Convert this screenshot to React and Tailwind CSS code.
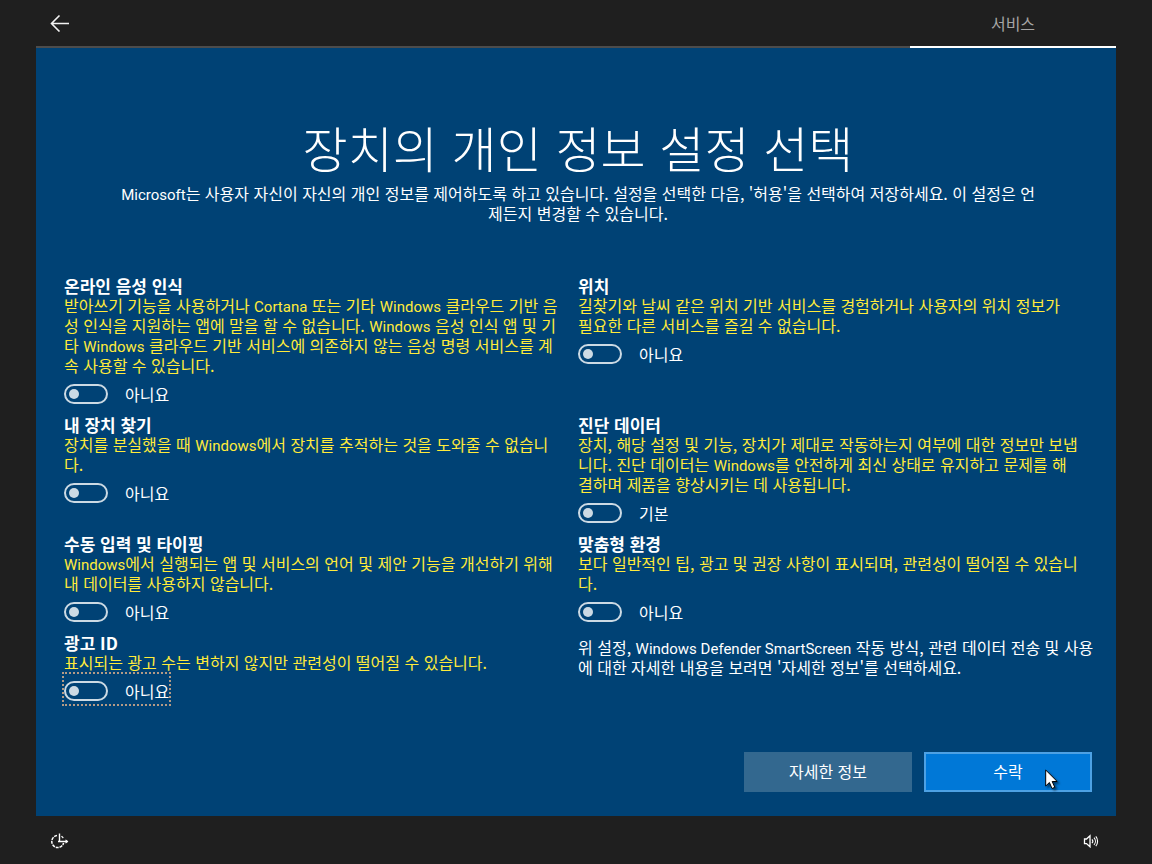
import React, { useState } from 'react';

const settings = [
  {
    id: 'speech',
    title: '온라인 음성 인식',
    text: '받아쓰기 기능을 사용하거나 Cortana 또는 기타 Windows 클라우드 기반 음\n성 인식을 지원하는 앱에 말을 할 수 없습니다. Windows 음성 인식 앱 및 기\n타 Windows 클라우드 기반 서비스에 의존하지 않는 음성 명령 서비스를 계\n속 사용할 수 있습니다.',
    off: '아니요',
    on: '예',
  },
  {
    id: 'location',
    title: '위치',
    text: '길찾기와 날씨 같은 위치 기반 서비스를 경험하거나 사용자의 위치 정보가\n필요한 다른 서비스를 즐길 수 없습니다.',
    off: '아니요',
    on: '예',
  },
  {
    id: 'find',
    title: '내 장치 찾기',
    text: '장치를 분실했을 때 Windows에서 장치를 추적하는 것을 도와줄 수 없습니\n다.',
    off: '아니요',
    on: '예',
  },
  {
    id: 'diagnostics',
    title: '진단 데이터',
    text: '장치, 해당 설정 및 기능, 장치가 제대로 작동하는지 여부에 대한 정보만 보냅\n니다. 진단 데이터는 Windows를 안전하게 최신 상태로 유지하고 문제를 해\n결하며 제품을 향상시키는 데 사용됩니다.',
    off: '기본',
    on: '전체',
  },
  {
    id: 'typing',
    title: '수동 입력 및 타이핑',
    text: 'Windows에서 실행되는 앱 및 서비스의 언어 및 제안 기능을 개선하기 위해\n내 데이터를 사용하지 않습니다.',
    off: '아니요',
    on: '예',
  },
  {
    id: 'tailored',
    title: '맞춤형 환경',
    text: '보다 일반적인 팁, 광고 및 권장 사항이 표시되며, 관련성이 떨어질 수 있습니\n다.',
    off: '아니요',
    on: '예',
  },
  {
    id: 'ads',
    title: '광고 ID',
    text: '표시되는 광고 수는 변하지 않지만 관련성이 떨어질 수 있습니다.',
    off: '아니요',
    on: '예',
    focused: true,
  },
];

const intro =
  "Microsoft는 사용자 자신이 자신의 개인 정보를 제어하도록 하고 있습니다. 설정을 선택한 다음, '허용'을 선택하여 저장하세요. 이 설정은 언\n제든지 변경할 수 있습니다.";

const note =
  "위 설정, Windows Defender SmartScreen 작동 방식, 관련 데이터 전송 및 사용\n에 대한 자세한 내용을 보려면 '자세한 정보'를 선택하세요.";

// Latin words get their own face, a little smaller than the Hangul around them
function Mixed({ children }) {
  return children.split(/([A-Za-z]+(?: [A-Za-z]+)*)/).map((part, i) =>
    i % 2 ? (
      <span key={i} className="font-['Roboto',sans-serif] text-[15px] leading-none">
        {part}
      </span>
    ) : (
      part
    )
  );
}

function Toggle({ setting }) {
  const [checked, setChecked] = useState(false);

  return (
    <label
      className={`relative mt-[9px] flex h-5 w-fit items-center gap-[17px] ${
        setting.focused
          ? 'before:absolute before:-inset-x-0.5 before:-top-[9px] before:-bottom-[5px] before:border-2 before:border-dotted before:border-[#b39a86]'
          : ''
      }`}
    >
      <input
        type="checkbox"
        role="switch"
        aria-label={setting.title}
        checked={checked}
        onChange={(e) => setChecked(e.target.checked)}
        className="peer sr-only"
      />
      <span className="flex h-5 w-11 items-center rounded-full border-2 border-[#ccdae4] px-[3px] peer-checked:justify-end">
        <span className="size-2.5 rounded-full bg-[#ccdae4]" />
      </span>
      <span>{checked ? setting.on : setting.off}</span>
    </label>
  );
}

function Setting({ setting }) {
  return (
    <section className="pb-[11px]">
      <h2 className="text-[17px] leading-[19px] font-bold">{setting.title}</h2>
      <p className="whitespace-pre-line text-[#ffeb3b]">
        <Mixed>{setting.text}</Mixed>
      </p>
      <Toggle setting={setting} />
    </section>
  );
}

function BackIcon() {
  return (
    <svg width="20" height="18" viewBox="0 0 20 18" fill="none" stroke="#f2f2f2" strokeWidth="1.6">
      <path d="M19 9.5H1.5M9.5 1.5l-8 8 8 8" />
    </svg>
  );
}

function EaseOfAccessIcon() {
  return (
    <svg width="18" height="16" viewBox="0 0 18 16" fill="none" stroke="#fff">
      <path d="M6 2.6A6 6 0 1 0 12.6 10" strokeWidth="1.5" strokeDasharray="3 0.9" />
      <path d="M8.5 0.5v8M7 8.5h9.5" strokeWidth="1.4" />
      <path d="M14.5 6.8l2 1.7-2 1.7" strokeWidth="1.1" />
      <path d="M10.5 3.2l1.8 1.8" strokeWidth="1.2" />
    </svg>
  );
}

function VolumeIcon() {
  return (
    <svg width="16" height="14" viewBox="0 0 16 14" fill="none" stroke="#fff" strokeWidth="1.3">
      <path d="M1.5 5h2L7 1.8v11L3.5 9.6h-2z" />
      <path d="M9 5.4a2.8 2.8 0 0 1 0 3.8" strokeWidth="1.1" />
      <path d="M11 3.6a5.6 5.6 0 0 1 0 7.4M12.8 2.4a7.6 7.6 0 0 1 0 9.8" strokeWidth="1.1" />
    </svg>
  );
}

function Pointer() {
  return (
    <svg
      className="pointer-events-none absolute top-[17px] left-[121px] drop-shadow-[2px_2px_1px_rgba(0,0,0,0.5)]"
      width="14"
      height="21"
      viewBox="0 0 14 21"
    >
      <path d="M.7 1v16l3.7-3.5 2.6 6 2.8-1.2-2.6-5.8h5z" fill="#fff" stroke="#000" />
    </svg>
  );
}

export default function App() {
  return (
    <div
      lang="ko"
      className="flex min-h-screen flex-col bg-[#1f1f1f] px-9 font-['Noto_Sans_CJK_KR',sans-serif] text-base leading-5 text-white"
    >
      {/* Top bar */}
      <header className="flex h-12">
        <div className="flex flex-1 items-center border-b-2 border-[#4c4c4c] pl-3.5">
          <button type="button" aria-label="뒤로">
            <BackIcon />
          </button>
        </div>
        <div className="flex w-[206px] items-center justify-center border-b-2 border-white text-[#a5a5a5]">
          서비스
        </div>
      </header>

      <main className="flex flex-1 flex-col bg-[#004275] pt-[67px] pr-6 pb-6 pl-7">
        <div className="text-center">
          <h1 className="mb-1 text-[49px] leading-16 font-light">장치의 개인 정보 설정 선택</h1>
          <p className="whitespace-pre-line">
            <Mixed>{intro}</Mixed>
          </p>
        </div>

        <div className="mt-[53px] grid grid-cols-2">
          {settings.map((setting) => (
            <Setting key={setting.id} setting={setting} />
          ))}
          <p className="-mr-2 pt-1 whitespace-pre-line">
            <Mixed>{note}</Mixed>
          </p>
        </div>

        {/* Actions */}
        <div className="mt-auto flex justify-end gap-3">
          <button type="button" className="h-10 w-[168px] bg-[#33688f] pb-0.5">
            자세한 정보
          </button>
          <div className="relative">
            <button type="button" className="h-10 w-[168px] border-2 border-[#4da1e4] bg-[#0078d7] pb-0.5">
              수락
            </button>
            <Pointer />
          </div>
        </div>
      </main>

      <footer className="flex h-12 items-center justify-between pt-0.5 pr-[17px] pl-[15px]">
        <button type="button" aria-label="접근성">
          <EaseOfAccessIcon />
        </button>
        <button type="button" aria-label="볼륨">
          <VolumeIcon />
        </button>
      </footer>
    </div>
  );
}
